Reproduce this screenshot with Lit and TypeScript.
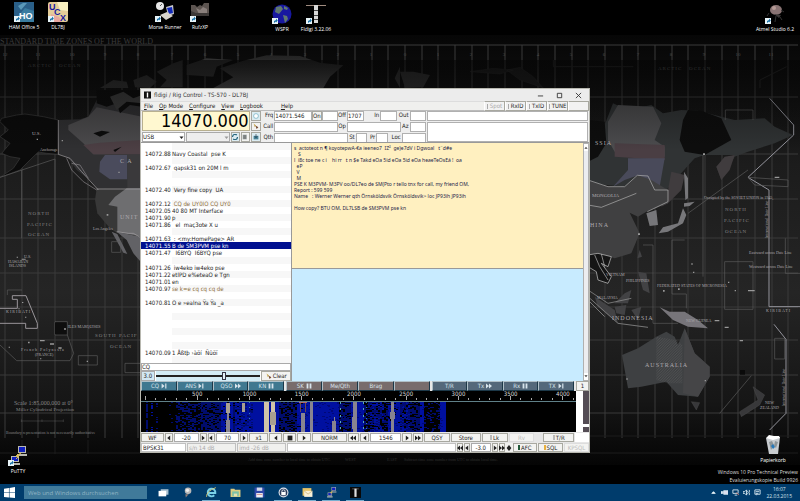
import { LitElement, html, svg, css } from "lit";
import { customElement } from "lit/decorators.js";
import { classMap } from "lit/directives/class-map.js";

/* ---------- data ---------- */

type Signal = { row: number; freq: string; text: string; cq?: boolean; selected?: boolean };

const ROWS = 31;
const SIGNALS: Signal[] = [
  { row: 1, freq: "14072.88", text: "Navy Coastal  pse K" },
  { row: 3, freq: "14072.67", text: " qapsk31 on 20M l m" },
  { row: 6, freq: "14072.40", text: " Very fine copy  UA" },
  { row: 8, freq: "14072.12", text: " CQ de UY0IO CQ UY0", cq: true },
  { row: 9, freq: "14072.05", text: "40 80 MT Interface" },
  { row: 10, freq: "14071.90", text: "p" },
  { row: 11, freq: "14071.86", text: "  el  maç3ote X u" },
  { row: 13, freq: "14071.63", text: " : <my:HomePage> AR" },
  { row: 14, freq: "14071.55", text: "B de SM3PVM pse kn", selected: true },
  { row: 15, freq: "14071.47", text: "  I6BYQ  I6BYQ pse" },
  { row: 17, freq: "14071.26", text: " iw4eko iw4eko pse" },
  { row: 18, freq: "14071.22", text: "etlPD e%eteaO e Tgn" },
  { row: 19, freq: "14071.01", text: "en" },
  { row: 20, freq: "14070.97", text: "se k=e cq cq cq de", cq: true },
  { row: 22, freq: "14070.81", text: "O e »ealna Ÿa Ÿa _a" },
  { row: 29, freq: "14070.09", text: "1 Åßtþ ›àöí  Ñûöï" },
];

const RX_LINES = [
  "s  actoteot n ¶ koyotepwA-€a ieeneo7  IZ²  ge)e7dV i Dgwoal   t¨d#e",
  "   S",
  "l  i8c toe ne c i    hi rr   t n $e Takd eOa 5id eOa 5id eOa heaeTeOsEá !  oa",
  "  eP",
  "  V",
  "  M",
  "PSE K M3PVM- M3PV oo/DL7eo de SM(Pto r tello tnx for call, my friend OM,",
  "Report : 599 599",
  "Name   : Werner Werner qth Örnsköldsvik Örnsköldsvik> loc JP93ih JP93ih",
  "",
  "How copy? BTU OM, DL7LSB de SM3PVM pse kn",
];

const MACROS = [
  { tone: "teal", items: [["CQ", "end"], ["ANS", "end"], ["QSO", "ff"], ["KN", "pause"]] },
  { tone: "brown", items: [["SK", "pause"], ["Me/Qth", ""], ["Brag", ""], ["", ""]] },
  { tone: "slate", items: [["T/R", ""], ["Tx", "ff"], ["Rx", "pause"], ["TX", "end"]] },
];

const GLYPHS: Record<string, string> = {
  left: "M7 1V9L2 5Z",
  right: "M3 1V9L8 5Z",
  stop: "M1 1H9V9H1Z",
  rew: "M5 1V9L0 5ZM10 1V9L5 5Z",
  ff: "M0 1V9L5 5ZM5 1V9L10 5Z",
  end: "M1 1V9L6 5ZM7 1H9V9H7Z",
  pause: "M1 1H4V9H1ZM6 1H9V9H6Z",
  down: "M1 3H9L5 8Z",
  up: "M1 7H9L5 2Z",
  diamond: "M5 0L9 5L5 10L1 5Z",
};
const glyph = (name: string) =>
  html`<svg class="glyph" viewBox="0 0 10 10" aria-hidden="true"><path d=${GLYPHS[name]} /></svg>`;

/* ---------- pictures ---------- */

const shortcut = svg`<path d="M0 14h6v6H0z" fill="#e8f4f8"/><path d="M2 19v-2l2-1v-1.500l1.800 2L4 18.500v-1z" fill="#1b72a8"/>`;
const icon = (body: unknown) => html`<svg class="pic" viewBox="0 0 20 20" aria-hidden="true">${body}</svg>`;

const putty = svg`<path d="M10 0h8v7h-8zM9 8h10v2H9z" fill="#b8b8b0"/><path d="M11 1h6v5h-6z" fill="#1020c0"/>
  <path d="M3 10h8v6H3zM2 17h10v2H2z" fill="#b8b8b0"/><path d="M4 11h6v4H4z" fill="#1020c0"/>
  <path d="M13 7L8 10h3l-3 3" stroke="#e8c040" fill="none"/>`;
const tower = svg`<path d="M0 1h20v1H0z" fill="#a08c80"/><path d="M8 1h4v18H8z" fill="#d8d8d8"/>
  <path d="M8 6h4v1H8zM8 11h4v1H8zM8 15h4v1H8z" fill="#444"/>`;

const PICS = {
  ham: svg`<path d="M0 0h20v20H0z" fill="#3a7ca0"/><path d="M0 0h20v9L11 6 4 14H0z" fill="#2a5f88"/><path d="M4 4l5-3h4L7 8z" fill="#5a98b8"/>
    <text x="5" y="17" font-size="9" font-weight="700" fill="#fff" font-family="Liberation Sans">HO</text>${shortcut}`,
  ucx: svg`<rect width="20" height="20" rx="2" fill="#e4cc98"/><path d="M9 0h11v9L12 8z" fill="#f8f0c0"/><path d="M3 12l8 3 3 5H3z" fill="#e8a8a0"/>
    <g font-family="Liberation Sans" font-weight="700" font-size="9" fill="#1818a0"><text x="1" y="8">U</text><text x="6" y="13">C</text><text x="12" y="19">X</text></g>${shortcut}`,
  morse: svg`<circle cx="5" cy="4" r="4" fill="#e8e8e8"/><path d="M5 4L7 2" stroke="#555"/><path d="M11 5l7-2 1 9-6 2z" fill="#c8c8d0"/><path d="M12 6l5-1 1 6-4 1z" fill="#1028b8"/>
    <path d="M5 13l7-3 6 4-7 4z" fill="#d8d4cc"/>${shortcut}`,
  rufz: svg`<path d="M1 3h4l2 2 3-2 2 1 2-3h5v13H1z" fill="#5c5450"/><path d="M6 6l4 2 3-3 4 2v4l-8 1z" fill="#8a807c"/><path d="M1 9l5 2h13v3H1z" fill="#3c3836"/>${shortcut}`,
  wspr: svg`<circle cx="10" cy="10" r="9.500" fill="#1818a0"/><path d="M4 3l5-1 2 3-4 5-4-2zM12 2l4 2-1 2-3-1zM11 11l4 1 1 3-3 4-1-4z" fill="#607870"/>${shortcut}`,
  fldigi: svg`${tower}${shortcut}`,
  atmel: svg`<ellipse cx="11" cy="6" rx="6" ry="5" fill="#8a7474"/><circle cx="9" cy="4" r="2" fill="#b89c98"/><path d="M9 10l7 1-2 3" fill="#3c3838"/>
    <path d="M4 9L2 12M16 6l3 2M11 12l-1 6M15 13l2 3" stroke="#333"/>${shortcut}`,
  putty: svg`${putty}${shortcut}`,
  bin: svg`<path d="M3 3l14-1-2 17H6z" fill="#c8ccd0"/><path d="M3 3l3-3 5 1 5 0 1 2-7 2z" fill="#fff"/><path d="M6 7l3-1 2 4-3 5zM12 6l3 1-2 6-2-2z" fill="#8c9498"/>
    <path d="M8 11l2-2 2 3-2 2z" fill="#2878b8"/>`,
};

const TASKS: { name: string; open?: boolean; body: unknown }[] = [
  { name: "Aufgabenansicht", body: svg`<path d="M5 4h14v10H5z" fill="#a8c0d0"/><path d="M1 7h14v10H1z" fill="#fff"/>` },
  { name: "Satellit", body: svg`<circle cx="11" cy="7" r="6" fill="#b8b8b8"/><circle cx="10" cy="6" r="3" fill="#eee"/><path d="M6 13h6l-5 6z" fill="#907c74"/>` },
  { name: "Internet Explorer", open: true, body: svg`<path d="M4 11H17A7 7 0 1 0 15 15" fill="none" stroke="#78d0e8" stroke-width="3.500"/><path d="M1 18Q0 8 18 1" fill="none" stroke="#e8d070" stroke-width="1.500"/>` },
  { name: "Explorer", body: svg`<path d="M1 3h7l1 2h10v13H1z" fill="#e0cc80"/><path d="M4 8h12v9H4z" fill="#7cc0a8"/><path d="M7 12h6v5H7z" fill="#e8e0b0"/>` },
  { name: "Commander", body: svg`<path d="M1 1h18v18H1z" fill="#3048a8"/><path d="M5 1h10v6H5z" fill="#d0d8e8"/><path d="M4 11h12v8H4z" fill="#f0f0f0"/><path d="M5 13h10v1H5z" fill="#c05050"/>` },
  { name: "KeePass", open: true, body: svg`<circle cx="10" cy="10" r="9" fill="#e0e4ec"/><circle cx="10" cy="10" r="7" fill="#283858"/><path d="M6 9h8v6H6z" fill="#fff"/><circle cx="10" cy="8" r="3" fill="none" stroke="#fff" stroke-width="1.500"/>` },
  { name: "Outlook", open: true, body: svg`<path d="M1 2h16v14H1z" fill="#e8c468"/><path d="M4 7h15v11H4z" fill="#f8f0d8"/><path d="M4 7l7 6 8-6" fill="none" stroke="#b89850"/>` },
  { name: "PuTTY", open: true, body: putty },
  { name: "fldigi", open: true, body: svg`<path d="M0 0h20v20H0z" fill="#080808"/><path d="M4 3h12v1H4z" fill="#999"/><path d="M8 3h4v15H8z" fill="#ddd"/>` },
];

const WF_H = 29;

/* Spectrum density per frequency column: [from, to, chance of a lit cell, colour class]. */
const BANDS: [number, number, number, string][] = [
  [5, 7, 0.9, "n1"], [10, 12, 0.4, "n2"], [15, 17, 0.3, "n1"], [28, 35, 0.06, "n1"], [35, 60, 0.5, "n1"],
  [60, 84, 0.7, "n1"], [80, 92, 0.8, "n2"], [92, 100, 0.8, "n1"], [94, 112, 0.6, "n2"], [100, 112, 0.9, "n1"],
  [112, 124, 1, "n2"], [124, 138, 1, "n2"], [138, 156, 0.65, "n1"], [156, 162, 0.9, "n2"], [162, 176, 1, "n2"],
  [176, 198, 1, "n2"], [198, 210, 0.75, "n1"], [210, 222, 1, "n2"], [222, 246, 0.55, "n1"], [228, 242, 0.3, "n2"],
  [246, 258, 0.9, "n2"], [258, 278, 0.6, "n1"], [258, 268, 0.3, "n2"], [278, 282, 0.9, "n2"], [282, 298, 0.2, "n1"],
  [298, 304, 1, "n2"],
];
/* Traces: [x, width, from row, to row, colour class]. */
const TRACES: [number, number, number, number, string][] = [
  [85, 4, 1, 10, "sig"], [85, 4, 17, 29, "grey"], [86, 2, 10, 17, "grey"], [101, 3, 1, 9, "sig"],
  [123, 5, 0, 29, "tan"], [130, 4, 0, 29, "tan"], [129, 6, 9, 22, "sig"], [160, 4, 10, 29, "grey"], [169, 3, 0, 29, "grey"],
  [191, 4, 18, 29, "grey"], [193, 1, 14, 29, "grey"], [212, 4, 0, 29, "grey"], [211, 5, 14, 26, "grey"],
  [249, 3, 0, 29, "grey"], [248, 5, 9, 16, "grey"],
];

function noisePaths() {
  let seed = 20150322;
  const rnd = () => ((seed = (seed * 1103515245 + 12345) & 0x7fffffff) >> 8) / 0x7fffff;
  const out: Record<string, string> = { n1: "", n2: "", gap: "" };
  for (const [a, b, p, c] of BANDS)
    for (let x = a; x < b; x += 2)
      for (let y = 0; y < WF_H; y++) if (rnd() < p) out[c] += `M${x} ${y}h2v1h-2z`;
  for (let i = 0; i < 260; i++) out.gap += `M${Math.floor(156 + rnd() * 144)} ${Math.floor(rnd() * 29)}h2v1h-2z`;
  return out;
}

function drawWaterfall() {
  const n = noisePaths();
  const ticks = Array.from({ length: 42 }, (_, i) => 4 + i * 10.42);
  return html`<svg class="fall" viewBox="0 0 434 40" preserveAspectRatio="none" role="img" aria-label="Wasserfall">
    <path d="M0 0H434V40H0Z" fill="#000" />
    ${ticks.map((x, i) => svg`<path d=${`M${x} ${i % 5 === 0 ? 5 : 7}V9`} stroke="#aaa" />`)}
    <path d="M0 10.500H434" stroke="#5f8088" />
    <g transform="translate(0 11)">
      <path d=${n.n1} fill="#000c6c" /><path d=${n.n2} fill="#0010a0" /><path d=${n.gap} fill="#000878" />
      ${TRACES.map(([x, w, a, b, c]) => svg`<path class=${c} d=${`M${x} ${a}h${w}V${b}h${-w}z`} />`)}
      <path d="M159.500 0v9M164.500 0v9" stroke="#6a4850" /><path d="M158 0h8" stroke="#b06868" />
      <path d="M199.500 0V29M221.500 0V29" stroke="#58a8b8" stroke-dasharray="2 4" /><path d="M224.500 0V29M108.500 0V18" stroke="#3880a8" stroke-dasharray="1 4" />
    </g>
  </svg>`;
}

function drawMap() {
  const meridians = Array.from({ length: 48 }, (_, i) => `M${5 + Math.round(i * 16.67)} 45V438`).join("");
  const parallels = [45, 97, 154, 199, 238, 273, 307, 340, 375, 413].map((y) => `M0 ${y}H798`).join("");
  const hours = Array.from({ length: 24 }, (_, i) => i);
  return html`<svg class="map" viewBox="0 0 800 501" preserveAspectRatio="xMidYMid slice" aria-hidden="true">
    <defs>
      <linearGradient id="sea" x1="0" y1="0" x2="0" y2="1">
        <stop offset="0" stop-color="#060606" /><stop offset=".3" stop-color="#1c1c1c" /><stop offset=".6" stop-color="#252525" />
        <stop offset=".85" stop-color="#161616" /><stop offset="1" stop-color="#050505" />
      </linearGradient>
      <linearGradient id="ice" x1="0" y1="0" x2="0" y2="1"><stop offset="0" stop-color="#222" /><stop offset="1" stop-color="#484848" /></linearGradient>
      <linearGradient id="fade" x1="0" y1="0" x2="0" y2="1"><stop offset="0" stop-color="#050505" stop-opacity=".6" /><stop offset="1" stop-color="#050505" stop-opacity="0" /></linearGradient>
      <pattern id="hatch" width="8" height="8" patternUnits="userSpaceOnUse"><path d="M0 8L8 0" stroke="#777" /></pattern>
    </defs>
    <path d="M0 35H800V465H0Z" fill="url(#sea)" />
    <path d=${meridians} stroke="#3a3a3a" fill="none" /><path d=${parallels} stroke="#3a3a3a" fill="none" />
    <path d="M0 453H140M590 453H798M22 440v14M55 440v14M88 440v14M590 436h208" stroke="#1c1c1c" />
    ${hours.map((h) => svg`<text class="m m5" x=${Math.round(5 + h * 33.3)} y="56" text-anchor="middle">${h < 12 ? 12 - h : h - 12}</text>`)}
    <g transform="scale(.33333)">
      <path d="M640 264L700 232L660 205L730 182L800 166L900 168L960 188L1030 196L990 230L970 264Z" fill="url(#ice)" />
      <path d="M300 264L340 240L380 245L385 264ZM400 240L440 225L470 245L450 264L405 262ZM470 215L520 190L548 180V262H480L500 240ZM560 195L620 175L700 180L650 200L640 230L560 225ZM1184 235L1200 200V264ZM1200 215L1240 215L1290 225L1270 262L1215 264Z" fill="#303030" />
      <path d="M1410 215L1480 205L1540 210L1500 222ZM1520 210L1560 202L1600 230L1630 264L1560 240Z" fill="#1c1c1c" stroke="#333" />
      <path d="M1660 180V200L1900 200M2360 200L2280 240V264M2460 264L2560 220V150M2620 264L2660 240" stroke="#282828" stroke-width="3" fill="none" />
    </g>
    <g transform="translate(0 90) scale(.33333)">
      <path d="M5 85L50 75L75 72L130 80L175 90V193L140 190L115 186L90 210L60 240L0 262L40 235L60 205L30 200L5 190L30 160L0 140L25 120L0 95Z" fill="#0b0b0b" stroke="#3c3c3c" stroke-width="2" />
      <path d="M175 90L240 88L265 80L280 50L300 10L426 0V295H290L270 270L230 240L205 205L175 190Z" fill="#303032" />
      <path d="M205 105L265 80L290 52L330 60L426 80V193H280L250 160L205 120Z" fill="#4c4b4d" />
      <path d="M250 165L300 158L426 150V193H280Z" fill="#4c3f44" />
      <path d="M300 215L315 195H382V268H330L298 245Z" fill="#4a4b5c" />
      <path d="M382 195H426V295H382Z" fill="#3a393b" />
      <path d="M290 0H426V50L390 45L360 70L350 40L320 50L290 40ZM280 130L305 122L330 126L300 140ZM340 180L365 170L345 186Z" fill="#0c0c0c" />
      <path d="M330 20L370 5L400 25L426 15V40L380 35L350 60Z" fill="#3a3a3a" />
      <path d="M290 295H426V440L350 428L330 415L292 370L285 330Z" fill="#383838" />
      <path d="M380 295H426V440L352 425V350L325 345L345 320Z" fill="#6e6e70" />
      <path d="M350 425L420 440L426 520L400 490L380 450ZM335 425L352 432L382 492L370 488Z" fill="#626266" />
      <path d="M175 90V193M175 193L210 205L245 245L295 300M290 297H426M350 425L385 430L400 430L426 445" stroke="#a8a4a8" stroke-width="2" fill="none" />
      <path d="M200 205L215 240L250 275L290 300M215 220L240 225L265 265" stroke="#8c888c" stroke-width="2" fill="none" />
      <path d="M0 262L165 207V480M65 240V445M22 615V600H66M165 695H202V735H165ZM202 735L221 790L210 812H50L0 765M235 797H292V825H235ZM375 820H426V848H375ZM335 455H362V487H335Z" stroke="#5c5c5c" stroke-width="2" fill="none" />
      <path d="M0 655H52V628H37V617H78L112 700V715H77V700H0" stroke="#9a969a" stroke-width="3" fill="none" />
      <path d="M165 697H200V733H165Z" fill="#0e0e0e" />
      <path d="M64 993H190M64 988v8M126 988v8M190 988v8" stroke="#777" fill="none" />
      <path d="M50 500h4v3h-4zM65 506h12v3H65zM66 636h4v3h-4zM55 655h4v3h-4zM75 680h4v3h-4zM120 750h14v4h-14zM150 760h12v4h-12zM175 772h10v4h-10zM84 755h5v5h-5zM26 770h4v3h-4zM120 805h4v3h-4zM260 812h4v4h-4zM192 715h6v4h-6zM110 146h4v4h-4zM185 150h4v4h-4zM355 245h4v4h-4zM320 372h5v5h-5z" fill="#999" />
    </g>
    <g transform="translate(588 90) scale(.33333)">
      <path d="M52 100L75 40L120 60L190 45L225 70L280 60L330 62L400 80L440 90L530 85L560 110L615 135L560 160L480 185L440 200L400 270L385 230L440 195L350 195L320 205L270 260L235 300L150 256L110 290L0 280V100Z" fill="#303334" />
      <path d="M60 95L90 45L195 50L220 100L200 150L230 170V200L80 185L60 150Z" fill="#4c4c4e" />
      <path d="M80 160L230 165V210L80 200Z" fill="#4a3e43" />
      <path d="M120 205L230 205L215 290L150 256L110 270L75 290L120 240Z" fill="#494a5a" />
      <path d="M285 90L300 60L340 62L400 85L430 150L350 195L290 185L275 150Z" fill="#0d0d0d" />
      <path d="M0 90L50 95L55 160L30 200L0 215Z" fill="#0e0e0e" />
      <path d="M385 230L410 200L440 195L425 240L400 270ZM250 245L290 255L280 300L240 340L220 350L240 300Z" fill="#403c3e" />
      <path d="M0 270L60 290L110 290L150 256L190 270L240 300L240 340L175 365L150 380L125 368L155 430L130 490L80 505L50 495L0 495Z" fill="#404041" />
      <path d="M0 270L60 290L110 290L148 256L180 258L200 300L240 300V335L178 365M0 345L40 352L145 310" fill="none" stroke="#b4b4b4" stroke-width="2" />
      <path d="M175 370L205 360L210 405L185 408ZM212 430L225 412L270 400L285 355L295 375L285 400L240 425ZM288 340L320 335L305 348L288 350ZM288 245L300 265V325L292 330Z" fill="#77777a" />
      <path d="M155 480L162 500L148 505ZM150 545L175 550L185 610L165 600ZM110 610L130 600L120 640L80 640ZM80 650L115 645L110 675L85 670ZM130 660L160 650L150 690ZM20 620L80 660L90 700L30 650Z" fill="#424244" />
      <path d="M0 495L30 490L70 500L60 530L40 520L70 560L60 580L30 570L25 545L0 530Z" fill="#151515" stroke="#ccc" stroke-width="2" />
      <path d="M20 495L35 530L60 570M40 492L50 530" fill="none" stroke="#bbb" stroke-width="2" />
      <path d="M0 620L90 700L180 712M5 635L50 680" stroke="#777" fill="none" stroke-width="3" />
      <path d="M215 652L245 665L290 665L330 690L360 715L300 710L255 690Z" fill="#77757a" />
      <path d="M0 600L60 640L130 625" stroke="#999" fill="none" stroke-width="2" />
      <path d="M102 795L150 775L205 740L235 725L260 740L270 765L290 715L320 790L365 830V860L330 920L270 915L235 875L160 890L120 895Z" fill="#3e4042" />
      <path d="M205 740L265 750L283 765V880H235L205 870Z" fill="url(#hatch)" />
      <path d="M290 715L320 790L365 830V860L330 920L285 910Z" fill="#454547" />
      <path d="M310 935L335 938L325 960ZM495 890L530 915L515 945L460 980L455 965L510 930Z" fill="#38383a" stroke="#555" />
      <path d="M545 25L617 105V135L480 262L543 300V650H640M558 703L594 748V970L545 1020" stroke="#94949c" stroke-width="3" fill="none" />
      <path d="M412 90V60H495V90M290 450H252V612H295V655M410 515H495V658H410ZM165 465H195V700H270M300 370L480 240M395 970L490 857M345 195V560M560 745H590V807H560ZM592 445V550H640M480 262L600 270V290L500 285Z" stroke="#5c5c5c" stroke-width="2" fill="none" />
      <path d="M345 190h6v5h-6zM150 430h6v5h-6zM310 520h4v4h-4zM315 545h4v4h-4zM225 600h5v5h-5zM270 595h5v5h-5zM380 690h14v4h-14zM410 710h12v4h-12zM480 600h20v4h-20zM560 260h14v4h-14zM455 750h10v4h-10zM420 575h4v4h-4zM440 600h4v4h-4zM350 870h4v4h-4zM115 865h4v4h-4z" fill="#999" />
      <path d="M456 840h15v14h-15z" fill="#0a0a0a" />
    </g>
    <path d="M0 60H800V150H0Z" fill="url(#fade)" />
    <text class="m m8" x="0" y="44">STANDARD TIME ZONES OF THE WORLD</text>
    <text class="m m5 wide dim" x="28" y="67">ARCTIC&#160;&#160;&#160;OCEAN</text><text class="m m5 wide dim" x="658" y="70">ARCTIC&#160;&#160;&#160;OCEAN</text>
    <g class="mid">
      <text class="m m5 wide" x="28" y="215">NORTH</text><text class="m m5 wide" x="27" y="226">PACIFIC</text><text class="m m5 wide" x="28" y="236">OCEAN</text>
      <text class="m m5 wide" x="725" y="211">NORTH</text><text class="m m5 wide" x="724" y="222">PACIFIC</text><text class="m m5 wide" x="725" y="233">OCEAN</text>
      <text class="m m5 wide" x="95" y="337">SOUTH PACIF</text><text class="m m5 wide" x="110" y="348">OCEAN</text>
    </g>
    <g class="lit">
      <text class="m m5" x="32" y="135">U.S.</text><text class="m m6 wide" x="120" y="163">C A</text><text class="m m6 wide" x="120" y="219">UNIT</text>
      <text class="m m4" x="40" y="151">Anchorage</text><text class="m m4" x="93" y="230">Los Angeles</text><text class="m m4" x="24" y="258">U.S.</text>
      <text class="m m4" x="8" y="263">HAWAIIAN</text><text class="m m4" x="9" y="267">ISLANDS</text><text class="m m4 wide" x="6" y="313">KIRIBATI</text>
      <text class="m m4 wide" x="21" y="351">French Polynesia</text><text class="m m4" x="35" y="356">(FRANCE)</text><text class="m m4" x="68" y="328">ILES MARQUISES</text>
      <text class="m m6 wide" x="595" y="145">SSIA</text><text class="m m5" x="592" y="197">MONGOLIA</text><text class="m m6 wide" x="590" y="227">HINA</text>
      <text class="m m4" x="626" y="282">PHILIPPINES</text><text class="m m4" x="597" y="299">MALAYSIA</text><text class="m m6 wide" x="612" y="320">INDONESIA</text>
      <text class="m m4" x="686" y="322">NEW GUINEA</text><text class="m m6 wide" x="645" y="367">AUSTRALIA</text><text class="m m4" x="606" y="276">VIETNAM</text>
      <text class="m m4" x="749" y="254">Eastward across Date Line</text><text class="m m4" x="749" y="268">Westward across Date Line</text>
      <text class="m m4 wide" x="766" y="312">KIRIBATI</text><text class="m m4" x="657" y="287">FEDERATED STATES OF MICRONESIA</text>
      <text class="m m4" x="704" y="199">Occupied by the SOVIET UNION in 1945,</text>
      <text class="m m4" x="765" y="404">NEW</text><text class="m m4" x="760" y="409">ZEALAND</text>
      <text class="m m4" transform="translate(768 238) rotate(-90)">International Date Line</text>
      <text class="m m4" transform="translate(785 406) rotate(-90)">International Date Line</text>
    </g>
    <g class="mid">
      <text class="m m6" x="14" y="405">Scale 1:85,000,000 at 0°</text><text class="m m5" x="16" y="411">Miller Cylindrical Projection</text>
      <text class="m m4" x="6" y="434">Boundary representation is not necessarily authoritative</text>
    </g>
    <text class="m m4 dim" x="248" y="461">Add time zone number to local time to obtain UTC.</text><text class="m m4 dim" x="345" y="461">WEST</text>
    <text class="m m4 dim" x="387" y="461">EAST</text>
    <text class="m m4 dim" x="404" y="461">Subtract time zone number from UTC to obtain local time.</text>
  </svg>`;
}

/* ---------- component ---------- */

@customElement("app-root")
export class AppRoot extends LitElement {
  static styles = css`
    :host { display: flex; flex-direction: column; height: 100vh; background: #000; overflow: hidden; font: 6px/8px "DejaVu Sans Condensed", "DejaVu Sans", sans-serif; color: #222; }
    *, *::before { box-sizing: border-box; }
    button, input, select, textarea { font: inherit; color: inherit; margin: 0; padding: 0; border: 0; border-radius: 0; min-width: 0; min-height: 0; background: none; outline: 0; }
    ul, ol { list-style: none; margin: 0; padding: 0; }

    .desktop { position: relative; flex: 1; min-height: 0; }
    .map { position: absolute; left: 0; top: 0; width: 100vw; height: 100vh; }
    .m { font-family: "Liberation Serif", serif; fill: #4a4a4a; }
    .m4 { font-size: 4px; } .m5 { font-size: 5px; } .m6 { font-size: 6px; } .m8 { font-size: 8px; fill: #3a3a3a; }
    .wide { letter-spacing: 1px; }
    .mid .m { fill: #858585; } .lit .m { fill: #aca8ac; } .dim { fill: #303030; }

    .shortcut { position: absolute; display: flex; flex-direction: column; align-items: center; width: 60px; gap: 2px; color: #fff; font: 5px/7px "Open Sans", sans-serif; white-space: nowrap; transform: translateX(-50%); }
    .pic { width: 20px; height: 20px; display: block; }
    .s-ham { left: 3%; top: 2px; } .s-ucx { left: 7.25%; top: 2px; } .s-morse { left: 20.625%; top: 2px; } .s-rufz { left: 25%; top: 2px; }
    .s-wspr { left: 35.25%; top: 4px; } .s-fldigi { left: 39.5%; top: 4px; } .s-atmel { left: 96.875%; top: 4px; }
    .s-putty { left: 2.25%; bottom: 9px; } .s-bin { left: 96.625%; bottom: 20px; }
    .build { position: absolute; right: 2px; bottom: 0; margin: 0; text-align: right; color: #ddd; font: 5px/8px "Open Sans", sans-serif; }

    .window { position: absolute; left: 17.5%; top: 88px; width: 56.25%; height: 365px; display: flex; flex-direction: column; background: #f0f0ee; border: 1px solid #b8b8b0; }
    .title { display: flex; align-items: center; height: 12px; background: #ececec; padding: 0 3px; gap: 3px; color: #333; }
    .title h1 { flex: 1; margin: 0; font: inherit; }
    .title .pic { width: 7px; height: 8px; }
    .title button { width: 16px; height: 10px; display: grid; place-items: center; }
    .title button svg { width: 7px; height: 7px; stroke: #333; fill: none; }
    .menu { display: flex; height: 10px; align-items: stretch; }
    .menu nav { flex: 1; display: flex; gap: 6px; padding: 0 3px; border-bottom: 1px solid #bbb; border-top: 1px solid #ddd; }
    .menu nav button:last-child { margin-left: 12px; }
    .menu nav button::first-letter { text-decoration: underline; }
    .lamps { display: flex; width: 105px; }
    .lamps > * { flex: 1; border: 1px solid #a8a8a0; border-left-color: #fff; background: #f2f2f2; display: flex; align-items: center; justify-content: center; gap: 2px; line-height: 6px; }
    .lamps .off { color: #aaa; }
    .lamp { appearance: none; width: 1px; height: 5px; background: #aaa; }

    .rig { display: grid; grid-template-columns: 120fr 165fr 161fr; height: 31px; background: #eee; }
    .vfo { display: grid; grid-template-columns: 1fr 10px; grid-template-rows: 20px 10px; gap: 1px; padding: 0 1px; }
    .lcd { display: flex; align-items: center; justify-content: flex-end; background: #fff8d0; border: 1px solid #b8b090; font-size: 18px; line-height: 22px; color: #000; height: 20px; }
    .stack { display: grid; gap: 1px; }
    .modes { display: grid; grid-template-columns: 43fr 44fr 9fr 9fr; gap: 1px; }
    .modes select, .modes .pick { background: #fff; border: 1px solid #aaa; appearance: none; }
    .pick { display: flex; align-items: center; justify-content: space-between; }
    .modes .pick select { border: 0; flex: 1; background: none; }
    .modes .pick.off { background: #eee; color: #999; }
    .btn { border: 1px solid #a8a8a0; background: #f3f3f1; display: flex; align-items: center; justify-content: center; gap: 1px; line-height: 6px; white-space: nowrap; cursor: pointer; min-width: 0; }
    .btn.cold { background: #dcecf2; }
    .btn:disabled { color: #bbb; border-color: #ddd; }
    .glyph { width: 5px; height: 5px; fill: currentColor; flex: none; }
    .btn > .glyph { width: 6px; height: 6px; }
    .log { display: grid; grid-template-rows: 1fr 1fr 1fr; gap: 1px; padding: 0 1px; }
    .log > div { display: grid; align-items: stretch; }
    .log label { text-align: right; padding-right: 1px; white-space: nowrap; }
    .log input { background: #fff; border: 1px solid #b0b0b0; width: 100%; }
    .l1 { grid-template-columns: 12fr 38fr 11fr 16fr 9fr 17fr 17fr 17fr 13fr 17fr; }
    .l2 { grid-template-columns: 12fr 65fr 9fr 55fr 9fr 17fr; }
    .l3 { grid-template-columns: 12fr 75fr 8fr 12fr 9fr 12fr 14fr 25fr; }
    .notes { display: grid; grid-template-rows: 10px 20px; gap: 1px; padding-right: 1px; }
    .notes > * { background: #fff; border: 1px solid #b0b0b0; resize: none; width: 100%; }

    .work { flex: 1; min-height: 0; display: grid; grid-template-columns: 151fr 297fr; border-top: 1px solid #999; }
    .left { display: flex; flex-direction: column; min-height: 0; background: #fff; border-right: 1px solid #999; }
    .signals { flex: 1; min-height: 0; display: grid; grid-auto-rows: 1fr; }
    .signals li { display: grid; grid-template-columns: 31px 1fr; min-height: 0; line-height: 7px; color: #222; }
    .signals span { padding-left: 4px; }
    .signals b { font-weight: 400; white-space: pre; }
    .signals li:nth-child(odd) b { background: #f7f7f7; }
    .signals .cq b { color: #8c6c38; }
    .signals .selected, .signals .selected:nth-child(odd) b { background: #001090; color: #fff; }
    .find { height: 8px; border: 1px solid #aaa; width: 100%; background: #fff; }
    .squelch { display: grid; grid-template-columns: 14fr 106fr 30fr; height: 10px; gap: 1px; }
    .squelch output { background: #d2e8f4; border: 1px solid #aaa; text-align: center; line-height: 7px; }
    input[type="range"] { appearance: none; background: #d2ecf6; width: 100%; }
    input[type="range"]::-webkit-slider-runnable-track { height: 2px; background: #222; }
    input[type="range"]::-webkit-slider-thumb { appearance: none; width: 4px; height: 8px; margin-top: -3px; background: #e4f2f8; border: 1px solid #334; }
    .right { display: grid; grid-template-columns: 1fr 6px; grid-template-rows: 126fr 112fr; row-gap: 1px; min-height: 0; background: #999; }
    .rx { background: #fff0c0; margin: 0; padding: 2px; font: 5px/6px "Noto Sans", sans-serif; color: #241c48; white-space: pre; overflow: hidden; min-height: 0; }
    .tx { background: #c8ebff; width: 100%; height: 100%; resize: none; }
    .scroll { grid-column: 2; grid-row: 1 / 3; background: #ecedf0; border: 1px solid #b0b0b0; display: flex; flex-direction: column; justify-content: space-between; }
    .scroll button { height: 7px; background: #fff; color: #444; display: grid; place-items: center; }
    .scroll .glyph { width: 4px; height: 4px; }

    .macros { display: grid; grid-template-columns: 144fr 144fr 143fr 13px; gap: 2px; height: 10px; background: #e8e8e8; }
    .group { display: grid; grid-template-columns: repeat(4, 1fr); }
    .group .btn { border: 1px solid; border-color: #b0c0c8 #1c3848 #1c3848 #b0c0c8; color: #d8e4ec; gap: 2px; }
    .teal .btn { background: #407890; } .brown .btn { background: #786c6c; } .slate .btn { background: #54687a; }
    .spectrum { display: grid; grid-template-columns: minmax(0, 434fr) 7px 6px; height: 41px; background: #000; }
    .scope { position: relative; min-width: 0; }
    .fall { display: block; width: 100%; height: 41px; shape-rendering: crispEdges; }
    .sig { fill: #a8a090; } .tan { fill: #d0c4a8; } .grey { fill: #888490; }
    .scale { position: absolute; top: 0; left: 0; width: 103%; display: grid; grid-template-columns: 30fr repeat(8, 52fr); color: #ddd; line-height: 6px; }
    .scale span { text-align: center; }
    .blank { background: #fff; }
    .level { background: #544c54; display: flex; flex-direction: column; justify-content: flex-end; padding-bottom: 5px; }
    .level i { height: 3px; background: #fff; }
    .controls { display: grid; height: 11px; padding: 1px 0; gap: 1px; background: #e6e6e6; grid-template-columns: 23fr 8fr 25fr 7fr 7fr 24fr 8fr 19fr 13fr 13fr 14fr 35fr 11fr 10fr 31fr 10fr 10fr 26fr 30fr 26fr 26fr 7fr 31fr 14fr; }
    .field { width: 100%; text-align: center; background: #fff; border: 1px solid #aaa; }
    .status { display: grid; height: 9px; gap: 1px; grid-template-columns: 45fr 49fr 49fr 168fr 6fr 6fr 20fr 6fr 6fr 6fr 24fr 25fr 25fr; align-items: stretch; }
    .status > .glyph { align-self: center; width: 6px; height: 6px; }
    .status span { border: 1px solid #c0c0c0; line-height: 7px; padding-left: 1px; color: #aaa; white-space: nowrap; }
    .status .mode { background: #fff; color: #222; } .status .long { background: #fff; }
    .check { appearance: none; flex: none; width: 2px; height: 5px; background: #bbb; }
    .check:checked { background: #205838; }
    .check.amber { background: #e8b040; }

    .taskbar { flex: none; height: 17px; display: flex; align-items: center; background: #003c6c; color: #fff; padding-right: 8px; font-family: "Open Sans", sans-serif; font-size: 5px; }
    .start { width: 24px; height: 17px; display: grid; place-items: center; padding-right: 6px; }
    .start svg { width: 11px; height: 11px; fill: #fff; }
    .search { width: 123px; height: 13px; background: #407a9a; padding: 0 4px; font-size: 6px; }
    .search::placeholder { color: #90b4c4; opacity: 1; }
    .apps { display: flex; margin-left: 4px; flex: 1; }
    .apps button { width: 24px; height: 17px; display: grid; place-items: center; }
    .apps svg { width: 11px; height: 11px; }
    .apps .open { position: relative; }
    .apps .open::before { content: ""; position: absolute; left: 3px; right: 3px; bottom: 0; height: 1px; background: #78b0d0; }
    .tray { display: flex; align-items: center; gap: 4px; margin-right: 6px; }
    .tray svg { width: 7px; height: 7px; fill: none; stroke: #d8e8f0; }
    time { text-align: center; line-height: 7px; color: #d8e4ec; }
  `;

  private place(name: keyof typeof PICS, label: string) {
    return html`<div class="shortcut s-${name}">${icon(PICS[name])}<span>${label}</span></div>`;
  }
  private nav(name: string, label: string) {
    return html`<button class="btn" aria-label=${label}>${glyph(name)}</button>`;
  }
  private field(id: string, label: string, value = "") {
    return html`<label for=${id}>${label}</label><input id=${id} .value=${value} />`;
  }
  private toggle(label: string, on = false, extra = "") {
    return html`<label class="btn"><input class="check ${extra}" type="checkbox" .checked=${on} />${label}</label>`;
  }

  private renderRig() {
    return html`<section class="rig">
      <div class="vfo">
        <div class="lcd">14070.000</div>
        <div class="stack">
          <button class="btn cold" aria-label="Wetter"><svg class="glyph" viewBox="0 0 10 10"><circle cx="5" cy="5" r="4" fill="#fff" stroke="#58a0b8" /></svg></button>
          <button class="btn" aria-label="Leeren"><svg class="glyph" viewBox="0 0 10 10"><path d="M1 1l4 3-2 3z" fill="#c8a850" /><path d="M4 4l5 3-3 3z" fill="#744830" /></svg></button>
        </div>
        <div class="modes">
          <div class="pick"><select aria-label="Betriebsart"><option>USB</option></select>${glyph("down")}</div>
          <div class="pick off"><select aria-label="Bandbreite" disabled><option></option></select>${glyph("down")}</div>
          <button class="btn cold" aria-label="Sync"><svg class="glyph" viewBox="0 0 10 10"><path d="M1 5a4 4 0 0 1 7-3M9 5a4 4 0 0 1-7 3" stroke="#286880" fill="none" stroke-width="2" /></svg></button>
          <button class="btn" aria-label="Log"><svg class="glyph" viewBox="0 0 10 10"><path d="M1 1h7v8H1z" fill="#a8b0b0" /><path d="M2 3h5M2 5h5M2 7h5" stroke="#444" /></svg></button>
        </div>
        <button class="btn cold" aria-label="Speichern"><svg class="glyph" viewBox="0 0 10 10"><path d="M1 3h8v6H1z" fill="#488498" /><path d="M5 0v6M3 4l2 2 2-2" stroke="#234" fill="none" /></svg></button>
      </div>
      <div class="log">
        <div class="l1">${this.field("frq", "Frq", "14071.546")}<button class="btn">On</button><input aria-label="On" />
          ${this.field("off", "Off", "1707")}${this.field("in", "In")}${this.field("out", "Out")}</div>
        <div class="l2">${this.field("call", "Call")}${this.field("op", "Op")}${this.field("az", "Az")}</div>
        <div class="l3">${this.field("qth", "Qth")}${this.field("st", "St")}${this.field("pr", "Pr")}${this.field("loc", "Loc")}</div>
      </div>
      <div class="notes"><input aria-label="Notiz" /><textarea aria-label="Notizen"></textarea></div>
    </section>`;
  }

  private renderSignals() {
    return html`<ol class="signals">${Array.from({ length: ROWS }, (_, i) => {
      const s = SIGNALS.find((x) => x.row === i);
      return html`<li class=${classMap({ cq: !!s?.cq, selected: !!s?.selected })}><span>${s?.freq}</span><b>${s?.text}</b></li>`;
    })}</ol>`;
  }

  render() {
    return html`
      <main class="desktop">
        ${drawMap()}
        ${this.place("ham", "HAM Office 5")}${this.place("ucx", "DL7BJ")}${this.place("morse", "Morse Runner")}
        ${this.place("rufz", "RufzXP")}${this.place("wspr", "WSPR")}${this.place("fldigi", "Fldigi 3.22.06")}
        ${this.place("atmel", "Atmel Studio 6.2")}${this.place("putty", "PuTTY")}${this.place("bin", "Papierkorb")}
        <p class="build">Windows 10 Pro Technical Preview<br />Evaluierungskopie Build 9926</p>

        <article class="window">
          <header class="title">
            <svg class="pic" viewBox="0 0 20 20" aria-hidden="true"><path d="M0 0h20v20H0z" fill="#111" /><path d="M8 3h4v14H8z" fill="#fff" /></svg>
            <h1>fldigi / Rig Control - TS-570 - DL7BJ</h1>
            <button aria-label="Minimieren"><svg viewBox="0 0 8 8"><path d="M1 4.500h6" /></svg></button>
            <button aria-label="Maximieren"><svg viewBox="0 0 8 8"><path d="M1.500 1.500h5v5h-5z" /></svg></button>
            <button aria-label="Schließen"><svg viewBox="0 0 8 8"><path d="M1 1l6 6M7 1l-6 6" /></svg></button>
          </header>
          <div class="menu">
            <nav>${["File", "Op Mode", "Configure", "View", "Logbook", "Help"].map((t) => html`<button>${t}</button>`)}</nav>
            <div class="lamps">
              <label class="off"><input class="lamp" type="checkbox" disabled />Spot</label>
              ${["RxID", "TxID", "TUNE"].map((t) => html`<label><input class="lamp" type="checkbox" />${t}</label>`)}<span></span>
            </div>
          </div>
          ${this.renderRig()}
          <section class="work">
            <div class="left">
              ${this.renderSignals()}
              <input class="find" aria-label="Suche" .value=${"CQ"} />
              <div class="squelch"><output>3.0</output><input type="range" aria-label="Pegel" min="0" max="100" .value=${"66"} />
                <button class="btn"><svg class="glyph" viewBox="0 0 10 10"><path d="M1 1l4 3-2 3z" fill="#c8a850" /><path d="M4 4l5 3-3 3z" fill="#744830" /></svg>Clear</button></div>
            </div>
            <div class="right">
              <pre class="rx">${RX_LINES.join("\n")}</pre>
              <textarea class="tx" aria-label="Senden"></textarea>
              <div class="scroll"><button aria-label="Nach oben">${glyph("up")}</button><button aria-label="Nach unten">${glyph("down")}</button></div>
            </div>
          </section>
          <div class="macros">
            ${MACROS.map((g) => html`<div class="group ${g.tone}">${g.items.map(([t, k]) => html`<button class="btn">${t}${k ? glyph(k) : ""}</button>`)}</div>`)}
            <button class="btn">1</button>
          </div>
          <div class="spectrum">
            <div class="scope">${drawWaterfall()}
              <div class="scale"><span></span>${[500, 1000, 1500, 2000, 2500, 3000, 3500, 4000].map((f) => html`<span>${f}</span>`)}</div>
            </div>
            <div class="blank"></div><div class="level"><i></i></div>
          </div>
          <div class="controls">
            <button class="btn">WF</button>${this.nav("left", "weniger")}<input class="field" aria-label="Referenz" .value=${"-20"} />${this.nav("right", "mehr")}
            ${this.nav("left", "weniger")}<input class="field" aria-label="Bereich" .value=${"70"} />${this.nav("right", "mehr")}<button class="btn">x1</button>
            ${this.nav("left", "links")}${this.nav("stop", "Mitte")}${this.nav("right", "rechts")}<button class="btn">NORM</button>
            ${this.nav("rew", "schnell zurück")}${this.nav("left", "zurück")}<input class="field" aria-label="Frequenz" .value=${"1546"} />
            ${this.nav("right", "vor")}${this.nav("ff", "schnell vor")}<button class="btn">QSY</button><button class="btn">Store</button>
            ${this.toggle("Lk")}<button class="btn" disabled>Rv</button><i></i>${this.toggle("T/R")}<i class="blank"></i>
          </div>
          <footer class="status">
            <span class="mode">BPSK31</span><span>s/n 14 dB</span><span>imd -26 dB</span><span class="long"></span>
            ${this.nav("rew", "erste")}${this.nav("left", "zurück")}<input class="field" aria-label="Sendepegel" .value=${"-3.0"} />${this.nav("right", "vor")}${this.nav("ff", "letzte")}
            ${glyph("diamond")}${this.toggle("AFC", true)}${this.toggle("SQL", false, "amber")}<button class="btn" disabled>KPSQL</button>
          </footer>
        </article>
      </main>

      <footer class="taskbar">
        <button class="start" aria-label="Start"><svg viewBox="0 0 20 20"><path d="M0 3l9-1v8H0zM10 2l10-2v10H10zM0 11h9v8l-9-1zM10 11h10v9l-10-1z" /></svg></button>
        <input class="search" aria-label="Suchen" placeholder="Web und Windows durchsuchen" />
        <div class="apps">${TASKS.map((t) => html`<button class=${classMap({ open: !!t.open })} aria-label=${t.name}><svg viewBox="0 0 20 20">${t.body}</svg></button>`)}</div>
        <div class="tray">
          <svg viewBox="0 0 8 8"><path d="M2 5l2-2 2 2z" fill="#fff" /></svg>
          <svg viewBox="0 0 8 8"><path d="M0 3h2v2H0zM3 2h5v4H3z" fill="#dde" /></svg>
          <svg viewBox="0 0 8 8"><path d="M1 1h6v4H1zM3 7h3" /><path d="M5 4l3 3" stroke="#e07060" /></svg>
          <svg viewBox="0 0 8 8"><path d="M0 3h2l2-2v6L2 5H0zM5 2q2 2 0 4M7 1q2 3 0 6" /></svg>
          <svg viewBox="0 0 8 8"><path d="M1 1h6v5H4L3 7V6H1zM2 3h4M2 5h3" /></svg>
        </div>
        <time>16:07<br />22.03.2015</time>
      </footer>`;
  }
}
